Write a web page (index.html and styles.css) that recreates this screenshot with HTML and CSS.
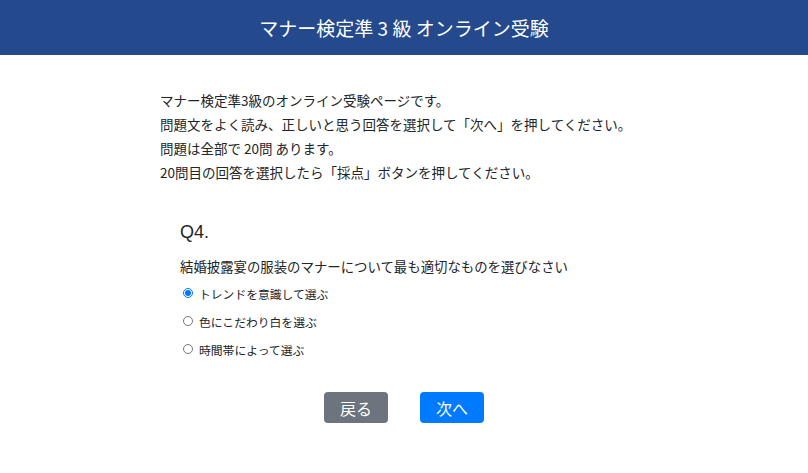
FILE: index.html
```html
<!DOCTYPE html>
<html lang="ja">
<head>
  <meta charset="UTF-8">
  <meta name="viewport" content="width=device-width, initial-scale=1.0">
  <title>マナー検定準3級 オンライン受験</title>
  <link rel="stylesheet" href="styles.css">
</head>
<body>

  <header class="header">
    <h1>マナー検定準 3 級 オンライン受験</h1>
  </header>

  <div class="content">
    <div class="intro">
      <p>マナー検定準3級のオンライン受験ページです。</p>
      <p>問題文をよく読み、正しいと思う回答を選択して「次へ」を押してください。</p>
      <p>問題は全部で 20問 あります。</p>
      <p>20問目の回答を選択したら「採点」ボタンを押してください。</p>
    </div>

    <div class="question">
      <h2>Q4.</h2>
      <p class="question-text">結婚披露宴の服装のマナーについて最も適切なものを選びなさい</p>
      <label class="option"><input type="radio" name="q4" checked>トレンドを意識して選ぶ</label>
      <label class="option"><input type="radio" name="q4">色にこだわり白を選ぶ</label>
      <label class="option"><input type="radio" name="q4">時間帯によって選ぶ</label>
    </div>

    <div class="buttons">
      <button class="btn btn-back">戻る</button>
      <button class="btn btn-next">次へ</button>
    </div>
  </div>

</body>
</html>
```

FILE: styles.css
```css
body {
  margin: 0;
  font-family: "Noto Sans CJK JP", "Liberation Sans", sans-serif;
  color: #212529;
  background: #fff;
}
.header {
  background-color: #24498c;
  height: 55px;
  display: flex;
  align-items: center;
  justify-content: center;
}
.header h1 {
  margin: 0;
  color: #fff;
  font-size: 19px;
  font-weight: normal;
}
.content {
  width: 488px;
  margin: 0 auto;
  padding-top: 33px;
}
.intro p {
  margin: 0;
  font-size: 13.5px;
  line-height: 24px;
}
.question {
  padding: 35px 20px 0;
}
.question h2 {
  margin: 0;
  font-family: "Liberation Sans", "Noto Sans CJK JP", sans-serif;
  font-size: 18px;
  font-weight: normal;
  line-height: 26px;
}
.question-text {
  margin: 10px 0 2px;
  font-size: 13.4px;
  line-height: 22px;
}
.option {
  display: flex;
  align-items: center;
  font-size: 11.8px;
  height: 28px;
}
.option input {
  margin: 0 6px 0 3px;
  width: 10px;
  height: 10px;
}
.buttons {
  display: flex;
  justify-content: center;
  gap: 32px;
  margin-top: 29px;
}
.btn {
  width: 64px;
  height: 31px;
  border: none;
  border-radius: 4px;
  color: #fff;
  font-size: 16px;
  font-family: "Noto Sans CJK JP", sans-serif;
  cursor: pointer;
}
.btn-back {
  background-color: #6c757d;
}
.btn-next {
  background-color: #007bff;
}
```
